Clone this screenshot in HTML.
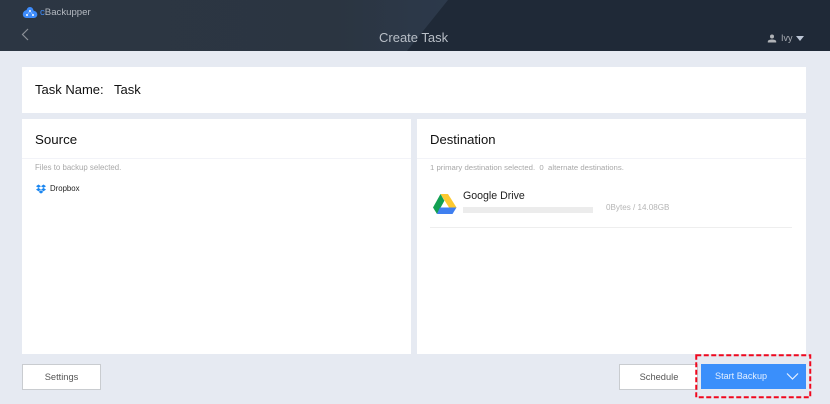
<!DOCTYPE html>
<html>
<head>
<meta charset="utf-8">
<style>
html,body{margin:0;padding:0}
body{width:830px;height:404px;position:relative;overflow:hidden;background:#e6eaf2;font-family:"Liberation Sans",Arial,sans-serif}
.a{position:absolute;white-space:nowrap}
.p{position:absolute;background:#fff}
.btn{position:absolute;box-sizing:border-box;background:#fff;border:1px solid #c9ccd0;text-align:center;color:#555;font-size:9.300px}
</style>
</head>
<body>
<svg class="a" style="left:0;top:0" width="830" height="51">
<defs><linearGradient id="g" x1="0" x2="448" y1="0" y2="0" gradientUnits="userSpaceOnUse"><stop offset="0" stop-color="#2c3643"/><stop offset=".75" stop-color="#2b3541"/><stop offset="1" stop-color="#2c394b"/></linearGradient></defs>
<rect width="830" height="51" fill="#1f2937"/>
<polygon points="0,0 448,0 407,51 0,51" fill="url(#g)"/>
</svg>
<svg class="a" style="left:22px;top:6px" width="16" height="13" viewBox="0 0 16 13">
<path d="M8 1C6 1 5 2.500 4.600 4C2.500 4.500 .8 6.200 .8 8.400C.8 10.600 2.500 12 4.500 12H11.800C13.800 12 15.300 10.500 15.300 8.500C15.300 6.400 13.600 5 11.600 4.600C11 2.500 10 1 8 1Z" fill="#3d8bfb"/>
<circle cx="8" cy="5" r="1" fill="#fff"/><circle cx="5" cy="9" r="1" fill="#fff"/><circle cx="11" cy="9" r="1" fill="#fff"/>
<path d="M8 5L5 9M8 5L11 9" stroke="#cfe2ff" stroke-width=".5"/>
</svg>
<div class="a" style="left:40px;top:6px;font-size:9.600px;line-height:13px;color:#b4b9c0"><span style="color:#3d8bfb">c</span>Backupper</div>
<svg class="a" style="left:20px;top:27px" width="10" height="15" viewBox="0 0 10 15"><path d="M8 2L2.500 7.500L8 13" fill="none" stroke="#8b9097" stroke-width="1.200"/></svg>
<div class="a" style="left:379px;top:30px;font-size:13px;line-height:16px;color:#b9bfc7">Create Task</div>
<svg class="a" style="left:767px;top:34px" width="10" height="9" viewBox="0 0 10 9"><circle cx="5" cy="2.500" r="2" fill="#b0b3b7"/><path d="M.8 8.500V7.500C.8 6 3 5.500 5 5.500S9.200 6 9.200 7.500V8.500Z" fill="#b0b3b7"/></svg>
<div class="a" style="left:781px;top:32px;font-size:9px;line-height:12px;color:#a9adb3">Ivy</div>
<svg class="a" style="left:796px;top:36px" width="8" height="5"><polygon points="0,0 8,0 4,5" fill="#bcc6d6"/></svg>

<div class="p" style="left:22px;top:67px;width:784px;height:46px"></div>
<div class="a" style="left:35px;top:82px;font-size:13px;line-height:16px;color:#111">Task Name:</div>
<div class="a" style="left:114px;top:82px;font-size:13px;line-height:16px;color:#111">Task</div>

<div class="p" style="left:22px;top:119px;width:389px;height:235px"></div>
<div class="p" style="left:417px;top:119px;width:389px;height:235px"></div>
<div class="a" style="left:22px;top:158px;width:389px;height:1px;background:#f2f3f8"></div>
<div class="a" style="left:417px;top:158px;width:389px;height:1px;background:#f2f3f8"></div>

<div class="a" style="left:35px;top:131px;font-size:13.300px;line-height:17px;color:#111">Source</div>
<div class="a" style="left:430px;top:131px;font-size:13.100px;line-height:17px;color:#111">Destination</div>

<div class="a" style="left:35px;top:162px;font-size:7.850px;line-height:12px;color:#a8a8a8">Files to backup selected.</div>
<svg class="a" style="left:36px;top:184px" width="10" height="10" viewBox="0 0 10 10">
<path d="M2.500 .5L5 2.200L2.500 3.900L0 2.200ZM7.500 .5L10 2.200L7.500 3.900L5 2.200ZM2.500 3.900L5 5.600L2.500 7.300L0 5.600ZM7.500 3.900L10 5.600L7.500 7.300L5 5.600ZM2.600 7.900L5 6.300L7.400 7.900L5 9.600Z" fill="#1a86f0"/>
</svg>
<div class="a" style="left:50px;top:183px;font-size:7.800px;line-height:12px;color:#222">Dropbox</div>

<div class="a" style="left:430px;top:162px;font-size:7.750px;line-height:12px;color:#a8a8a8">1 primary destination selected.&nbsp; 0&nbsp; alternate destinations.</div>
<svg class="a" style="left:432px;top:193px" width="25" height="23" viewBox="0 0 25 23">
<polygon points="8.500,1 16,1 24.500,14.500 17,14.500" fill="#fdc92f"/>
<polygon points="8.500,1 12.400,7.800 5,21 1,14.500" fill="#12a052"/>
<polygon points="8,14.500 24.500,14.500 20.500,21 5,21" fill="#3f7ff0"/>
</svg>
<div class="a" style="left:463px;top:189px;font-size:10.600px;line-height:14px;color:#222">Google Drive</div>
<div class="a" style="left:463px;top:207px;width:130px;height:6px;background:#ececec"></div>
<div class="a" style="left:606px;top:202px;font-size:8.100px;line-height:12px;color:#b5b5b5">0Bytes / 14.08GB</div>
<div class="a" style="left:430px;top:227px;width:362px;height:1px;background:#eeeeee"></div>

<div class="btn" style="left:22px;top:364px;width:79px;height:26px;line-height:25px">Settings</div>
<div class="btn" style="left:619px;top:364px;width:79px;height:26px;line-height:25px;padding-left:1px">Schedule</div>
<div class="a" style="left:701px;top:364px;width:105px;height:25px;background:#3a8ffb"></div>
<div class="a" style="left:715px;top:370px;font-size:9.100px;line-height:13px;color:#e3efff">Start Backup</div>
<svg class="a" style="left:786px;top:372px" width="13" height="9" viewBox="0 0 13 9"><path d="M1 1.500L6.500 7L12 1.500" fill="none" stroke="#e8f1ff" stroke-width="1.200"/></svg>
<svg class="a" style="left:695px;top:354px" width="117" height="45"><rect x="1.250" y="1.250" width="114" height="42" fill="none" stroke="#f0081e" stroke-width="2" stroke-dasharray="5 2.500"/></svg>
</body>
</html>
